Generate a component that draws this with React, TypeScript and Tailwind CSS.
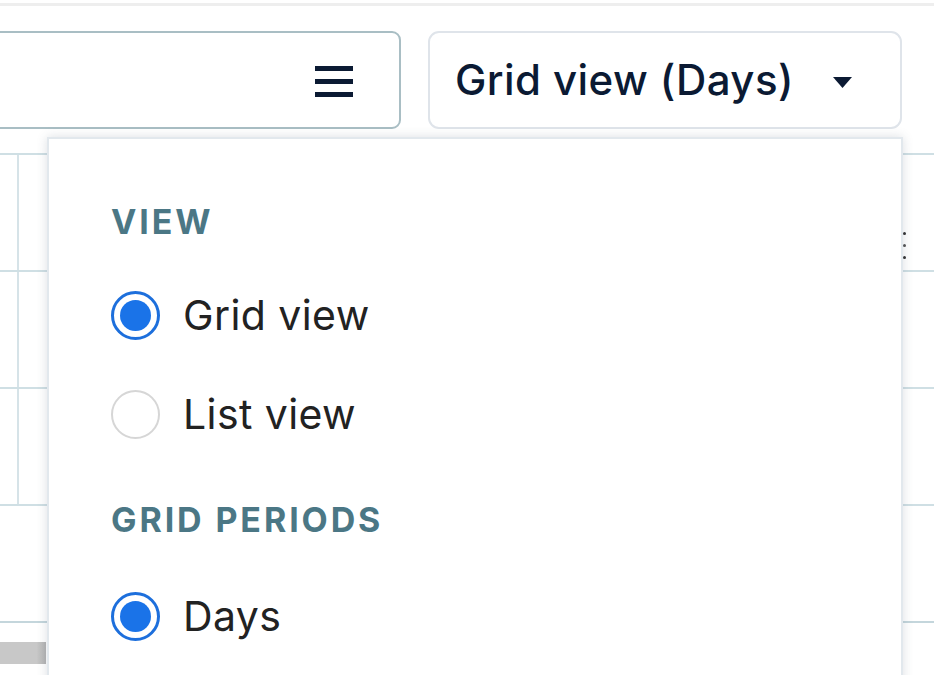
import React from "react";

function Radio({ checked }: { checked: boolean }) {
  return checked ? (
    <div className="w-[49px] h-[49px] rounded-full border-[3px] border-[#1d6fdc] flex items-center justify-center shrink-0">
      <div className="w-[31px] h-[31px] rounded-full bg-[#1a73e8]" />
    </div>
  ) : (
    <div className="w-[49px] h-[49px] rounded-full border-[2px] border-[#d6d6d6] shrink-0" />
  );
}

function Option({ label, checked }: { label: string; checked: boolean }) {
  return (
    <div className="flex items-center gap-[23px] h-[49px]">
      <Radio checked={checked} />
      <span className="text-[41px] leading-none tracking-[0.01em] text-[#222222]">{label}</span>
    </div>
  );
}

export default function App() {
  return (
    <div
      className="relative w-[934px] h-[675px] overflow-hidden bg-white"
      style={{ fontFamily: "Inter, 'Noto Sans', sans-serif" }}
    >
      <div className="mt-[3px] h-[3px] bg-[#eeeeee]" />

      {/* header */}
      <div className="mt-[25px] flex items-center">
        <div className="-ml-[20px] w-[421px] h-[98px] rounded-[9px] border-[2px] border-[#a9bec4] flex items-center justify-end pr-[46px]">
          <svg className="mt-[2px]" width="38" height="31" viewBox="0 0 38 31">
            <rect x="0" y="0" width="38" height="5" fill="#0b1a33" />
            <rect x="0" y="13" width="38" height="5" fill="#0b1a33" />
            <rect x="0" y="26" width="38" height="5" fill="#0b1a33" />
          </svg>
        </div>
        <div className="ml-[27px] w-[474px] h-[98px] rounded-[11px] border-[2px] border-[#dfe4ea] flex items-center pl-[25px] pr-[48px]">
          <span className="text-[42px] font-medium text-[#0b1a33] leading-none tracking-[0.01em]">
            Grid view (Days)
          </span>
          <svg className="ml-auto mt-[4px]" width="19" height="11" viewBox="0 0 19 11">
            <path d="M0 0 L19 0 L9.5 11 Z" fill="#0b1a33" />
          </svg>
        </div>
      </div>

      {/* background grid */}
      <div className="mt-[24px]">
        {[0, 1, 2].map((i) => (
          <div key={i} className="relative h-[117px] border-t-[2px] border-[#cfdfe4] flex">
            <div className="w-[19px] border-r-[2px] border-[#d6e3e8]" />
            {i === 0 && (
              <div className="absolute left-[903px] top-[77px] flex flex-col gap-[9px]">
                <div className="w-[3px] h-[3px] rounded-full bg-[#333]" />
                <div className="w-[3px] h-[3px] rounded-full bg-[#555]" />
                <div className="w-[3px] h-[3px] rounded-full bg-[#333]" />
              </div>
            )}
          </div>
        ))}
        <div className="h-[117px] border-t-[2px] border-[#cfdfe4]" />
        <div className="border-t-[2px] border-[#c4d6dc] pt-[19px]">
          <div className="w-[46px] h-[22px] bg-gradient-to-r from-[#c8c8c8] from-80% to-[#b4b4b4]" />
        </div>
      </div>

      {/* dropdown menu */}
      <div className="absolute left-[47px] top-[137px] w-[856px] h-[600px] bg-white border-[2px] border-[#e2e8ed] shadow-[0_0_10px_rgba(60,80,100,0.18)] pl-[62px] pt-[66px]">
        <div className="text-[34px] font-bold leading-none tracking-[0.085em] text-[#4b7785]">VIEW</div>
        <div className="mt-[52px]">
          <Option label="Grid view" checked />
        </div>
        <div className="mt-[50px]">
          <Option label="List view" checked={false} />
        </div>
        <div className="mt-[64px] text-[34px] font-bold leading-none tracking-[0.085em] text-[#4b7785]">
          GRID PERIODS
        </div>
        <div className="mt-[55px]">
          <Option label="Days" checked />
        </div>
      </div>
    </div>
  );
}
